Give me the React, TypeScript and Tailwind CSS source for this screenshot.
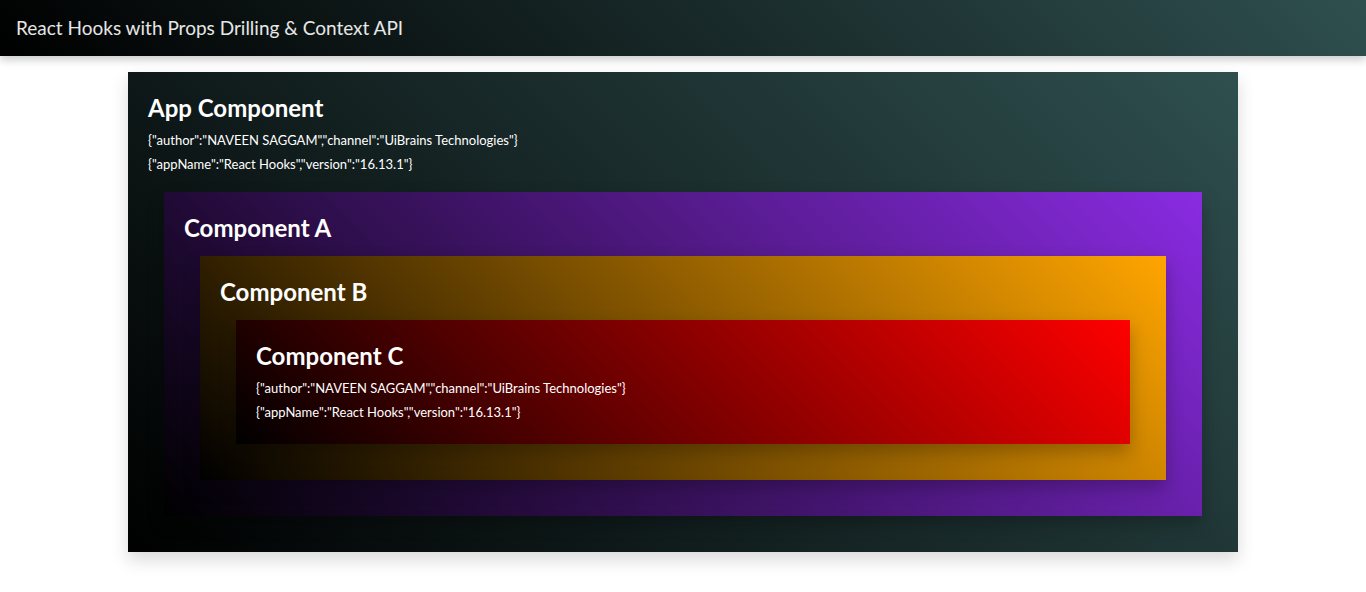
const author = { author: 'NAVEEN SAGGAM', channel: 'UiBrains Technologies' };
const app = { appName: 'React Hooks', version: '16.13.1' };

const ComponentC: React.FC = () => (
  <div className="mx-4 mb-4 mt-2 flex flex-col bg-[linear-gradient(45deg,black,red)] p-5 shadow-[0_8px_16px_rgba(0,0,0,0.25)]">
    <h3 className="mb-1.5 mt-0.5 text-[24px] font-bold leading-[28px] text-white">Component C</h3>
    <div className="text-[13px] leading-6 text-white">
      <p>{JSON.stringify(author)}</p>
      <p>{JSON.stringify(app)}</p>
    </div>
  </div>
);

const ComponentB: React.FC = () => (
  <div className="mx-4 mb-4 mt-2 flex flex-col bg-[linear-gradient(45deg,black,orange)] p-5 shadow-[0_8px_16px_rgba(0,0,0,0.25)]">
    <h3 className="mb-1.5 mt-0.5 text-[24px] font-bold leading-[28px] text-white">Component B</h3>
    <ComponentC />
  </div>
);

const ComponentA: React.FC = () => (
  <div className="mx-4 mb-4 mt-2 flex flex-col bg-[linear-gradient(45deg,black,blueviolet)] p-5 shadow-[0_8px_16px_rgba(0,0,0,0.25)]">
    <h3 className="mb-1.5 mt-0.5 text-[24px] font-bold leading-[28px] text-white">Component A</h3>
    <ComponentB />
  </div>
);

export default function App() {
  return (
    <div className="min-h-[592px] bg-white font-['Lato',sans-serif]">
      <nav className="flex h-14 items-center bg-[linear-gradient(45deg,black,darkslategray)] px-4 shadow-[0_4px_8px_rgba(0,0,0,0.2)]">
        <span className="text-[19px] text-white/90">
          React Hooks with Props Drilling &amp; Context API
        </span>
      </nav>
      <div className="mx-auto mt-4 flex w-[1110px] flex-col bg-[linear-gradient(45deg,black,darkslategray)] p-5 shadow-[0_8px_16px_rgba(0,0,0,0.15)]">
        <h3 className="mb-1.5 mt-0.5 text-[24px] font-bold leading-[28px] text-white">App Component</h3>
        <div className="mb-2 text-[13px] leading-6 text-white">
          <p>{JSON.stringify(author)}</p>
          <p>{JSON.stringify(app)}</p>
        </div>
        <ComponentA />
      </div>
    </div>
  );
}
